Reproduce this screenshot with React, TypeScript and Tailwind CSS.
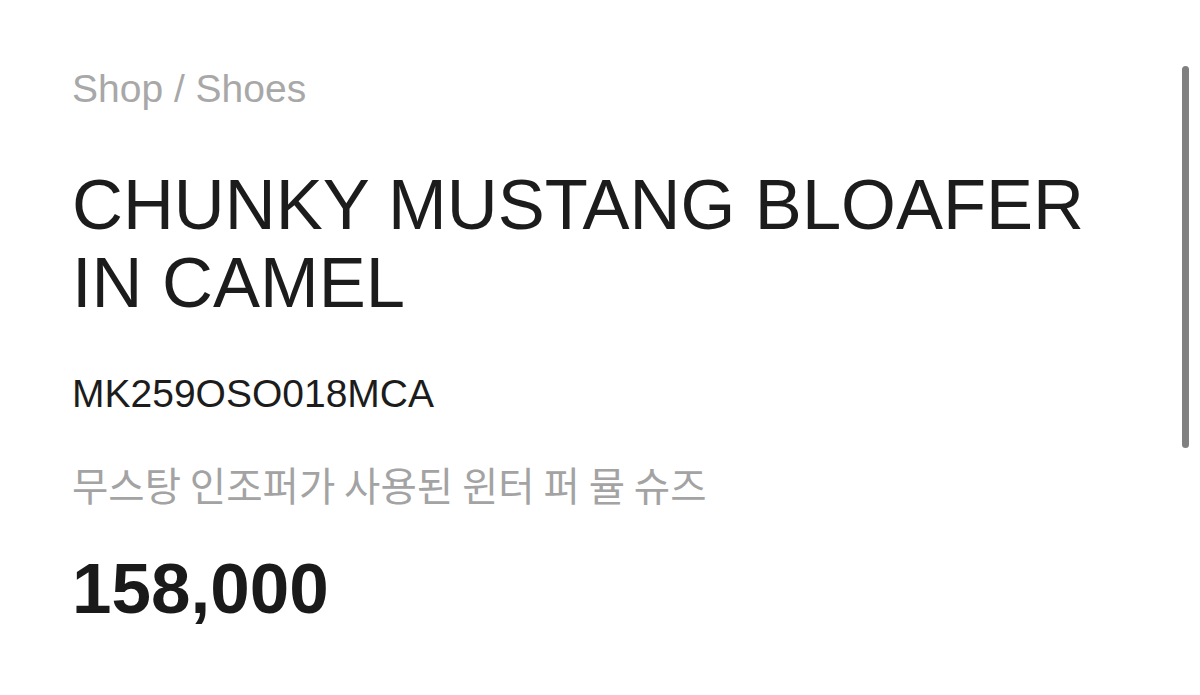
const App = () => {
  return (
    <div className="relative w-[1200px] h-[695px] bg-white overflow-hidden font-['Liberation_Sans',Arial,sans-serif]">
      <div className="pl-[72px] pt-[66px] flex flex-col">
        <p className="text-[39px] leading-[46px] text-[#a8a8a8]">Shop / Shoes</p>
        <h1 className="mt-[54px] text-[70.5px] leading-[78px] text-[#1c1c1c]">
          CHUNKY MUSTANG BLOAFER
          <br />
          IN CAMEL
        </h1>
        <p className="mt-[49px] text-[39px] leading-[46px] text-[#1c1c1c]">MK259OSO018MCA</p>
        <p className="mt-[44px] text-[39.5px] leading-[46px] text-[#a3a3a3] font-['Noto_Sans_CJK_KR',sans-serif]">
          무스탕 인조퍼가 사용된 윈터 퍼 뮬 슈즈
        </p>
        <p className="mt-[44px] text-[71px] leading-[76px] font-bold text-[#1a1a1a]">158,000</p>
      </div>
      {/* scrollbar thumb */}
      <div className="absolute right-[11px] top-[66px] w-[7px] h-[382px] rounded-full bg-[#808080]" />
    </div>
  );
};

export default App;
